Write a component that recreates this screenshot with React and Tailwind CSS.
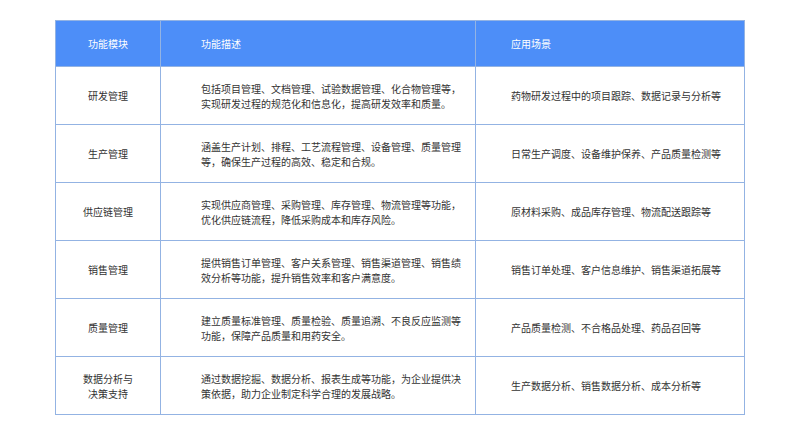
const rows = [
  ['研发管理', ['包括项目管理、文档管理、试验数据管理、化合物管理等，', '实现研发过程的规范化和信息化，提高研发效率和质量。'], '药物研发过程中的项目跟踪、数据记录与分析等'],
  ['生产管理', ['涵盖生产计划、排程、工艺流程管理、设备管理、质量管理', '等，确保生产过程的高效、稳定和合规。'], '日常生产调度、设备维护保养、产品质量检测等'],
  ['供应链管理', ['实现供应商管理、采购管理、库存管理、物流管理等功能，', '优化供应链流程，降低采购成本和库存风险。'], '原材料采购、成品库存管理、物流配送跟踪等'],
  ['销售管理', ['提供销售订单管理、客户关系管理、销售渠道管理、销售绩', '效分析等功能，提升销售效率和客户满意度。'], '销售订单处理、客户信息维护、销售渠道拓展等'],
  ['质量管理', ['建立质量标准管理、质量检验、质量追溯、不良反应监测等', '功能，保障产品质量和用药安全。'], '产品质量检测、不合格品处理、药品召回等'],
  [['数据分析与', '决策支持'], ['通过数据挖掘、数据分析、报表生成等功能，为企业提供决', '策依据，助力企业制定科学合理的发展战略。'], '生产数据分析、销售数据分析、成本分析等'],
]

const cell = 'border border-[#93b3e3] align-middle'

export default function App() {
  return (
    <div className="w-[800px] h-[430px] bg-white pt-5 pl-[55px]" style={{ fontFamily: '"Noto Sans CJK SC", sans-serif' }}>
      <table className="border-collapse w-[690px] text-[10px] leading-[15px] text-[#333]">
        <colgroup>
          <col className="w-[105px]" />
          <col className="w-[315px]" />
          <col />
        </colgroup>
        <thead>
          <tr className="h-[46px] bg-[#4d8ef8] text-white">
            <th className={`${cell} font-normal text-center`}>功能模块</th>
            <th className={`${cell} font-normal text-left pl-10`}>功能描述</th>
            <th className={`${cell} font-normal text-left pl-[35px]`}>应用场景</th>
          </tr>
        </thead>
        <tbody>
          {rows.map(([name, desc, scene], i) => (
            <tr key={i} className="h-[58px]">
              <td className={`${cell} text-center`}>
                {(Array.isArray(name) ? name : [name]).map((l) => <div key={l}>{l}</div>)}
              </td>
              <td className={`${cell} pl-10`}>
                {desc.map((l) => <div key={l} className="whitespace-nowrap">{l}</div>)}
              </td>
              <td className={`${cell} pl-[35px]`}>{scene}</td>
            </tr>
          ))}
        </tbody>
      </table>
    </div>
  )
}
